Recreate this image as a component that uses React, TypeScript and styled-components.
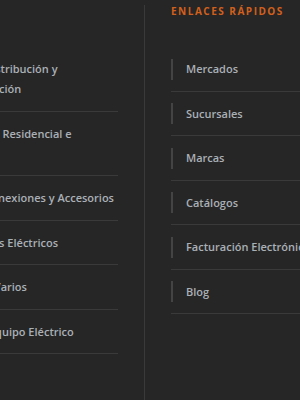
import styled, { createGlobalStyle } from "styled-components";

const GlobalStyle = createGlobalStyle`
  html, body {
    margin: 0;
    padding: 0;
    background: #262626;
    overflow: hidden;
  }
  body {
    font-family: "Open Sans", "Liberation Sans", sans-serif;
  }
`;

interface LinkColumn {
  title: string;
  links: string[];
}

const columns: LinkColumn[] = [
  {
    title: "Productos",
    links: [
      "Cajas de Distribución y Transformación",
      "Iluminación Residencial e Industrial",
      "Tuercas, Conexiones y Accesorios",
      "Conductores Eléctricos",
      "Productos Varios",
      "Tablero y Equipo Eléctrico",
    ],
  },
  {
    title: "Enlaces Rápidos",
    links: [
      "Mercados",
      "Sucursales",
      "Marcas",
      "Catálogos",
      "Facturación Electrónica",
      "Blog",
    ],
  },
];

export default function App() {
  return (
    <>
      <GlobalStyle />
      <Footer>
        {columns.map((col, i) => (
          <Group key={col.title}>
            {i > 0 && <Separator />}
            <Column>
              <Heading>{col.title}</Heading>
              <List>
                {col.links.map((link) => (
                  <Item key={link}>
                    <ItemLink href="#">{link}</ItemLink>
                  </Item>
                ))}
              </List>
            </Column>
          </Group>
        ))}
      </Footer>
    </>
  );
}

const Footer = styled.footer`
  display: flex;
  width: 600px;
  height: 400px;
  margin-left: -78px;
  background: #262626;
`;

const Group = styled.div`
  display: flex;
`;

const Separator = styled.div`
  width: 1px;
  margin: 5px 26px 0;
  background: #3a3a3a;
`;

const Column = styled.div`
  width: 196px;
  flex-shrink: 0;
`;

const Heading = styled.h4`
  margin: 0;
  padding-top: 4px;
  height: 47px;
  box-sizing: border-box;
  font-size: 10px;
  line-height: 14px;
  font-weight: 700;
  letter-spacing: 1.5px;
  text-transform: uppercase;
  color: #d2601c;
`;

const List = styled.ul`
  list-style: none;
  margin: 0;
  padding: 0;
`;

const Item = styled.li`
  padding: 11.5px 0 11px;
  border-bottom: 1px solid #3a3a3a;
`;

const ItemLink = styled.a`
  display: block;
  padding: 0.5px 0 0.5px 13px;
  border-left: 2px solid #444444;
  font-size: 11px;
  font-weight: 600;
  line-height: 20px;
  color: #aab0b6;
  text-decoration: none;
`;
